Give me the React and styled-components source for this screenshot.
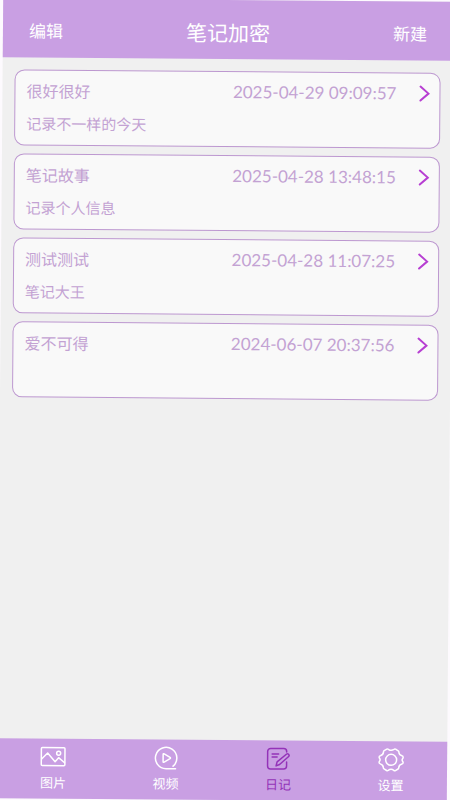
import React, { useState } from 'react'
import styled, { createGlobalStyle } from 'styled-components'

const GlobalStyle = createGlobalStyle`
    * {
        box-sizing: border-box;
    }
    body {
        margin: 0;
        overflow: hidden;
        background: #fdfafe;
        font-family: "Noto Sans CJK SC", sans-serif;
    }
`

const Screen = styled.div`
    display: flex;
    flex-direction: column;
    min-height: 100vh;
    background: #f0f0f0;
    transform: rotate(0.46deg);
`

const Header = styled.header`
    display: grid;
    grid-template-columns: 1fr auto 1fr;
    align-items: center;
    height: 59px;
    padding: 4px 26px 0;
    background: #c99fe3;
    color: #fff;
`

const Title = styled.h1`
    margin: 0;
    font-size: 21px;
    line-height: 28px;
    font-weight: 400;
`

const HeaderButton = styled.button`
    justify-self: ${props => props.$side};
    padding: 0;
    border: 0;
    background: none;
    color: inherit;
    font-family: inherit;
    font-size: 17px;
    line-height: 24px;
    cursor: pointer;
`

const NoteList = styled.ul`
    flex: 1;
    display: flex;
    flex-direction: column;
    gap: 8px;
    margin: 0;
    padding: 12px;
    list-style: none;
`

const Note = styled.a`
    display: flex;
    flex-direction: column;
    gap: 9px;
    height: 76px;
    padding: 8px 9px 0 11px;
    border: 1px solid #bd98d0;
    border-radius: 10px;
    background: #f9f9f9;
    color: #c3a2d3;
    text-decoration: none;
`

const NoteTop = styled.div`
    display: flex;
    align-items: center;
    height: 24px;
`

const NoteName = styled.span`
    flex: 1;
    font-size: 16px;
    line-height: 24px;
`

const NoteTime = styled.time`
    margin-right: 22px;
    font-family: Lato, "Noto Sans CJK SC", sans-serif;
    font-size: 17px;
    line-height: 24px;
`

const NoteText = styled.span`
    font-size: 15px;
    line-height: 24px;
`

const TabBar = styled.nav`
    display: flex;
    height: 60px;
    background: #c99fe3;
`

const Tab = styled.a`
    flex: 1;
    display: flex;
    flex-direction: column;
    align-items: center;
    gap: 1px;
    padding-top: 5px;
    color: ${props => (props.$active ? '#9433b8' : '#fff')};
    font-size: 13px;
    line-height: 20px;
    text-decoration: none;
`

const Icon = styled.svg`
    width: 28px;
    height: 28px;
    fill: none;
    stroke: currentColor;
    stroke-width: 1.5;
    stroke-linecap: round;
    stroke-linejoin: round;
`

const Arrow = styled.svg`
    width: 12px;
    height: 18px;
    fill: none;
    stroke: #b73fd2;
    stroke-width: 2;
    stroke-linecap: round;
`

const PictureIcon = () => (
    <Icon viewBox="0 0 28 28" aria-hidden="true">
        <rect x="2.2" y="4" width="23.6" height="18" rx="1" />
        <path d="M2.500 15.500 8.500 9.500l7.500 8.500 3.500-4 6 5" />
        <circle cx="19.500" cy="9.500" r="2" />
    </Icon>
)

const VideoIcon = () => (
    <Icon viewBox="0 0 28 28" aria-hidden="true">
        <path d="M23.500 24.200H14A10.700 10.700 0 1 1 21 21.600" />
        <path d="M11 10v7q0 1.200 1.100.6l5.800-3.500q.9-.6 0-1.200l-5.800-3.500q-1.100-.6-1.100.6z" />
    </Icon>
)

const DiaryIcon = () => (
    <Icon viewBox="0 0 28 28" aria-hidden="true">
        <path d="M22.500 6.500V6a3 3 0 0 0-3-3H6.500a3 3 0 0 0-3 3v14.500a3 3 0 0 0 3 3h13a3 3 0 0 0 3-3V16.500" />
        <path d="M8 8.500h6.500M8 11.500h5" />
        <path d="m12 20.500 1-4 9.500-8q1-.7 1.800.2l.4.500q.7 1-.2 1.800l-9 8z" />
    </Icon>
)

const SettingsIcon = () => (
    <Icon viewBox="0 0 28 28" aria-hidden="true">
        <path d="M9.600 2.800q.9-.5 1.600.2 2.800 2 5.600 0 .7-.7 1.600-.2l2.600 1.600q.8.500.7 1.400.2 2.700 3.100 3.600 1.200.3 1.200 1.400 0 .7-.4 1.200-1.200 1.500 0 3 .4.500.4 1.200 0 1.100-1.200 1.400-2.900.9-3.100 3.600.1.900-.7 1.400l-2.600 1.600q-.9.5-1.600-.2-2.800-2-5.600 0-.7.7-1.600.2L7 22.600q-.8-.5-.7-1.400-.2-2.700-3.100-3.600Q2 17.300 2 16.200q0-.7.400-1.200 1.200-1.500 0-3-.4-.5-.4-1.200 0-1.100 1.200-1.400 2.900-.9 3.100-3.600-.1-.9.7-1.400z" />
        <circle cx="14" cy="13.500" r="5.500" />
    </Icon>
)

const notes = [
    { name: '很好很好', time: '2025-04-29 09:09:57', text: '记录不一样的今天' },
    { name: '笔记故事', time: '2025-04-28 13:48:15', text: '记录个人信息' },
    { name: '测试测试', time: '2025-04-28 11:07:25', text: '笔记大王' },
    { name: '爱不可得', time: '2024-06-07 20:37:56', text: '' },
]

const tabs = [
    { id: 'pictures', label: '图片', icon: <PictureIcon /> },
    { id: 'videos', label: '视频', icon: <VideoIcon /> },
    { id: 'diary', label: '日记', icon: <DiaryIcon /> },
    { id: 'settings', label: '设置', icon: <SettingsIcon /> },
]

const App = () => {

    const [active, setActive] = useState('diary');

    return (
        <Screen>
            <GlobalStyle />
            <Header>
                <HeaderButton $side="start">编辑</HeaderButton>
                <Title>笔记加密</Title>
                <HeaderButton $side="end">新建</HeaderButton>
            </Header>
            <NoteList>
                {notes.map(note => (
                    <li key={note.time}>
                        <Note href="#note">
                            <NoteTop>
                                <NoteName>{note.name}</NoteName>
                                <NoteTime>{note.time}</NoteTime>
                                <Arrow viewBox="0 0 12 18" aria-hidden="true">
                                    <path d="M2 2l8 7-8 7" />
                                </Arrow>
                            </NoteTop>
                            {note.text && <NoteText>{note.text}</NoteText>}
                        </Note>
                    </li>
                ))}
            </NoteList>
            <TabBar>
                {tabs.map(tab => (
                    <Tab
                        key={tab.id}
                        href={`#${tab.id}`}
                        $active={tab.id === active}
                        onClick={() => setActive(tab.id)}
                    >
                        {tab.icon}
                        {tab.label}
                    </Tab>
                ))}
            </TabBar>
        </Screen>
    )
}

export default App
